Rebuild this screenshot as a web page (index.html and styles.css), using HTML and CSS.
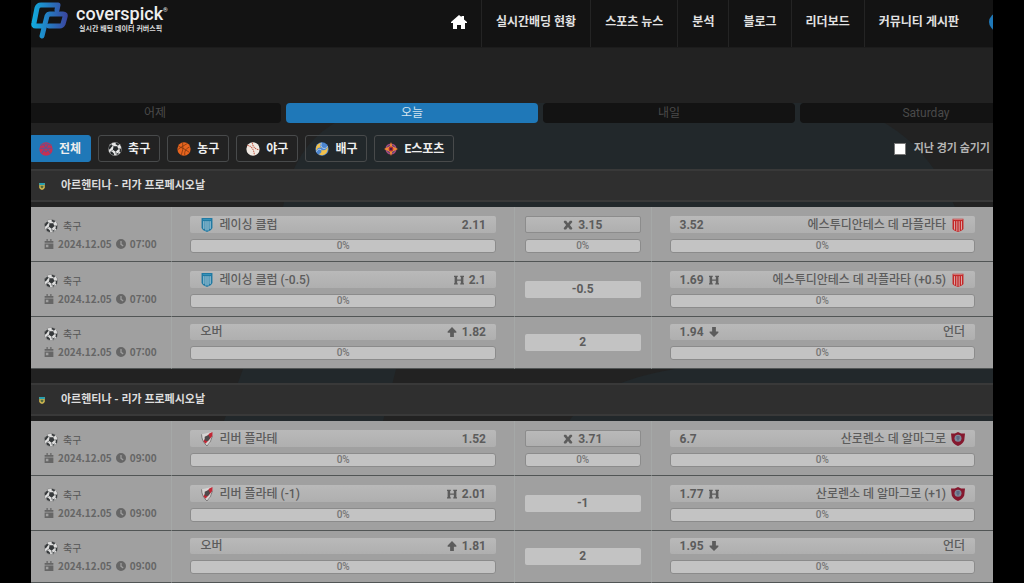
FILE: index.html
```html
<!DOCTYPE html>
<html lang="ko">
<head>
<meta charset="utf-8">
<meta name="viewport" content="width=device-width, initial-scale=1">
<title>coverspick</title>
<link rel="stylesheet" href="styles.css">
</head>
<body>
<svg class="sprite" aria-hidden="true">
  <defs>
    <linearGradient id="logo-fill" gradientUnits="userSpaceOnUse" x1="2" y1="0" x2="36" y2="0"><stop offset="0" stop-color="#12a9dc"/><stop offset="1" stop-color="#3a459f"/></linearGradient>
    <symbol id="ball" viewBox="0 0 20 20"><circle cx="10" cy="10" r="9.5" fill="#e8e8e8"/><path d="M8 6l5 0 2 4-4 4-4-3zM1 7l4-4 1 3-3 4-2 1zM11 .6l5 2-1 2-4-1zM19.300 9l-1 6-2-1 1-4zM3 14l3 0 3 3-1 2-4-2zM13 16l3-1-3 4z" fill="#24282a"/><path d="M8 6L6 5M13 6l2-2M15 10l3 0M11 14l1 4M7 11l-3 3" stroke="#24282a" fill="none"/><circle cx="10" cy="10" r="9.5" fill="none" stroke="#555" stroke-width=".6"/></symbol>
    <symbol id="all" viewBox="0 0 20 20"><circle cx="10" cy="10" r="9.500" fill="#c72f53"/><path d="M3 5q7-5 14 0M2 9h16M4 16l3-5 3 3 3-3 3 5M7 4l3 5 3-5" stroke="#5c5791" stroke-width="1.500" fill="none"/></symbol>
    <symbol id="basket" viewBox="0 0 20 20"><circle cx="10" cy="10" r="9.500" fill="#e8641e"/><path d="M2 6q8 3 16 9M8 1q2 9-2 18M15 2q-9 5-14 9M18 7q-8 3-7 12" stroke="#71330f" stroke-width="1" fill="none"/></symbol>
    <symbol id="baseball" viewBox="0 0 20 20"><circle cx="10" cy="10" r="9.500" fill="#f0e9e2"/><path d="M2 5q9 1 10 14M9 1q1 9 10 10" stroke="#c65a45" stroke-width="1.500" stroke-dasharray="2 1" fill="none"/></symbol>
    <symbol id="volley" viewBox="0 0 20 20"><circle cx="10" cy="10" r="9.500" fill="#4b86d0"/><path d="M9 1C3 2 0 7 2 13c1-5 5-6 9-4C7 7 6 4 9 1zM18 6c-1 5-5 7-9 5 1 4-1 6-4 6 7 5 15-1 13-11z" fill="#f2c14c"/><path d="M9 1q-2 5 2 8 4 2 7-3M9 11q-5-2-7 3" stroke="#cbdcf0" fill="none"/></symbol>
    <symbol id="esport" viewBox="0 0 20 20"><circle cx="10" cy="10" r="7" fill="#44417c" stroke="#a94b7c" stroke-width="2"/><path d="M10 0l2 6 8 4-8 4-2 6-2-6-8-4 8-4z" fill="#f08a32"/><circle cx="10" cy="10" r="3.500" fill="#ad273c"/><circle cx="10" cy="10" r="1.500" fill="#281e42"/></symbol>
    <symbol id="league" viewBox="0 0 8 10"><path d="M0 0h8v6q0 3-4 4-4-1-4-4z" fill="#d0b650"/><path d="M0 0h8v3H0z" fill="#269eb0"/><path d="M2 4h4v2L4 8 2 6z" fill="#50683c"/></symbol>
    <symbol id="racing" viewBox="0 0 16 18"><path d="M1 0h14v13q-1 3-7 5-6-2-7-5z" fill="#217aa3"/><path d="M4 4v10M6.700 4v12M9.300 4v12M12 4v10" stroke="#c8dce4" stroke-width="1.200"/><path d="M3 2h10" stroke="#3e9bc3"/></symbol>
    <symbol id="estudiantes" viewBox="0 0 16 18"><path d="M1 1h14v13q-1 2-7 4-6-2-7-4z" fill="#c42727"/><path d="M3.500 4v11M6.500 4v13M9.500 4v13M12.500 4v11" stroke="#dfcaca" stroke-width="1"/><path d="M2 2h12" stroke="#d58c8c"/></symbol>
    <symbol id="river" viewBox="0 0 16 18"><path d="M1 3l5-1 8-2 1 5-3 10-4 3-5-5z" fill="#d6d4d3"/><path d="M15 0v5L6 15l-3-3L11 2z" fill="#c22735"/><path d="M5 6l5-2 2 4-3 4-4-1z" fill="#4f4a4b"/><path d="M1 3q0 9 7 15 5-4 7-13" fill="none" stroke="#6b6868"/></symbol>
    <symbol id="sanlorenzo" viewBox="0 0 18 18"><path d="M0 2l5 0 4-2 4 2 5 0-1 9q-2 5-8 7-6-2-8-7z" fill="#85182e"/><circle cx="9" cy="8" r="4.500" fill="#7f8999"/><path d="M7 5h4v3l-2 4-2-4z" fill="#5d6a85"/></symbol>
    <symbol id="calendar" viewBox="0 0 16 16"><path d="M1 3h3V0h2v3h4V0h2v3h3v3H1zM1 7h14v9H1zM3 9v4h4V9z" fill="currentColor" fill-rule="evenodd"/></symbol>
    <symbol id="clock" viewBox="0 0 16 16"><path d="M8 0a8 8 0 100 16A8 8 0 008 0zM7 3h2v5l3 2-1 2-4-3z" fill="currentColor" fill-rule="evenodd"/></symbol>
    <symbol id="cross" viewBox="0 0 16 16"><path d="M2 1h3l3 4 3-4h3l1 2-4 5 4 5-1 2h-3l-3-4-3 4H2l-1-2 4-5-4-5z" fill="currentColor"/></symbol>
    <symbol id="h" viewBox="0 0 16 16"><path d="M0 1h6v2H5v4h6V3h-1V1h6v2h-1v10h1v2h-6v-2h1V9H5v4h1v2H0v-2h1V3H0z" fill="currentColor"/></symbol>
    <symbol id="up" viewBox="0 0 16 16"><path d="M8 0l7 7v2h-4v7H5V9H1V7z" fill="currentColor"/></symbol>
    <symbol id="down" viewBox="0 0 16 16"><path d="M8 16l7-7V7h-4V0H5v7H1v2z" fill="currentColor"/></symbol>
  </defs>
</svg>

<div class="frame">
  <svg class="backdrop" viewBox="0 0 962 583" preserveAspectRatio="none" aria-hidden="true"><path d="M252 207q15-100 130-104H780q100 4 144 104z"/><path d="M212 369h153l-15 60H190zM534 429q20-45 110-60h318v60z"/></svg>

  <header class="header">
    <a class="brand" href="#">
      <svg class="brand-mark" viewBox="0 0 38 38" aria-hidden="true"><path d="M26 9L27 4H10Q7 4 6 7L3 22Q2 25 5 25H12M11 35L16 15Q17 13 19 13H32Q35 13 34 16L32 23Q31 25 29 25H18" fill="none" stroke="url(#logo-fill)" stroke-width="5" stroke-linejoin="round" stroke-linecap="round"/></svg>
      <span class="brand-text"><span class="brand-name">coverspick<sup>®</sup></span><span class="brand-sub">실시간 배팅 데이터 커버스픽</span></span>
    </a>
    <nav class="nav">
      <a href="#" aria-label="홈"><svg class="home" viewBox="0 0 16 16" aria-hidden="true"><path d="M8 1l2.500 2V2H13v3.500L16 8v1h-2v6h-4v-4H6v4H2V9H0V8z" fill="#fff"/></svg></a>
      <a href="#">실시간배딩 현황</a><a href="#">스포츠 뉴스</a><a href="#">분석</a><a href="#">블로그</a><a href="#">리더보드</a><a href="#">커뮤니티 게시판</a>
    </nav>
    <button class="round" type="button" aria-label="메뉴"></button>
  </header>

  <main>
    <div class="days">
      <button type="button">어제</button><button type="button" class="active">오늘</button><button type="button">내일</button><button type="button">Saturday</button>
    </div>
    <div class="filters">
      <button type="button" class="active"><svg><use href="#all"/></svg>전체</button>
      <button type="button"><svg><use href="#ball"/></svg>축구</button>
      <button type="button"><svg><use href="#basket"/></svg>농구</button>
      <button type="button"><svg><use href="#baseball"/></svg>야구</button>
      <button type="button"><svg><use href="#volley"/></svg>배구</button>
      <button type="button"><svg><use href="#esport"/></svg>E스포츠</button>
      <label class="hide-past"><input type="checkbox">지난 경기 숨기기</label>
    </div>

    <section class="league">
      <h2><svg><use href="#league"/></svg>아르헨티나 - 리가 프로페시오날</h2>
      <table>
        <colgroup><col class="c-info"><col class="c-team"><col class="c-mid"><col class="c-team"></colgroup>
        <tr>
          <td><div class="sport"><svg><use href="#ball"/></svg>축구</div><div class="when"><svg><use href="#calendar"/></svg>2024.12.05<svg><use href="#clock"/></svg>07:00</div></td>
          <td><button type="button" class="pick"><svg class="crest"><use href="#racing"/></svg><span class="name">레이싱 클럽</span><span class="odd">2.11</span></button><div class="bar">0%</div></td>
          <td><button type="button" class="pick draw"><svg class="mark"><use href="#cross"/></svg><span class="odd">3.15</span></button><div class="bar">0%</div></td>
          <td><button type="button" class="pick"><span class="odd">3.52</span><span class="name end">에스투디안테스 데 라플라타</span><svg class="crest"><use href="#estudiantes"/></svg></button><div class="bar">0%</div></td>
        </tr>
        <tr>
          <td><div class="sport"><svg><use href="#ball"/></svg>축구</div><div class="when"><svg><use href="#calendar"/></svg>2024.12.05<svg><use href="#clock"/></svg>07:00</div></td>
          <td><button type="button" class="pick"><svg class="crest"><use href="#racing"/></svg><span class="name">레이싱 클럽 (-0.5)</span><svg class="mark"><use href="#h"/></svg><span class="odd">2.1</span></button><div class="bar">0%</div></td>
          <td><div class="line">-0.5</div></td>
          <td><button type="button" class="pick"><span class="odd">1.69</span><svg class="mark"><use href="#h"/></svg><span class="name end">에스투디안테스 데 라플라타 (+0.5)</span><svg class="crest"><use href="#estudiantes"/></svg></button><div class="bar">0%</div></td>
        </tr>
        <tr class="total">
          <td><div class="sport"><svg><use href="#ball"/></svg>축구</div><div class="when"><svg><use href="#calendar"/></svg>2024.12.05<svg><use href="#clock"/></svg>07:00</div></td>
          <td><button type="button" class="pick"><span class="name">오버</span><svg class="mark"><use href="#up"/></svg><span class="odd">1.82</span></button><div class="bar">0%</div></td>
          <td><div class="line">2</div></td>
          <td><button type="button" class="pick"><span class="odd">1.94</span><svg class="mark"><use href="#down"/></svg><span class="name end">언더</span></button><div class="bar">0%</div></td>
        </tr>
      </table>
    </section>

    <section class="league">
      <h2><svg><use href="#league"/></svg>아르헨티나 - 리가 프로페시오날</h2>
      <table>
        <colgroup><col class="c-info"><col class="c-team"><col class="c-mid"><col class="c-team"></colgroup>
        <tr>
          <td><div class="sport"><svg><use href="#ball"/></svg>축구</div><div class="when"><svg><use href="#calendar"/></svg>2024.12.05<svg><use href="#clock"/></svg>09:00</div></td>
          <td><button type="button" class="pick"><svg class="crest"><use href="#river"/></svg><span class="name">리버 플라테</span><span class="odd">1.52</span></button><div class="bar">0%</div></td>
          <td><button type="button" class="pick draw"><svg class="mark"><use href="#cross"/></svg><span class="odd">3.71</span></button><div class="bar">0%</div></td>
          <td><button type="button" class="pick"><span class="odd">6.7</span><span class="name end">산로렌소 데 알마그로</span><svg class="crest"><use href="#sanlorenzo"/></svg></button><div class="bar">0%</div></td>
        </tr>
        <tr>
          <td><div class="sport"><svg><use href="#ball"/></svg>축구</div><div class="when"><svg><use href="#calendar"/></svg>2024.12.05<svg><use href="#clock"/></svg>09:00</div></td>
          <td><button type="button" class="pick"><svg class="crest"><use href="#river"/></svg><span class="name">리버 플라테 (-1)</span><svg class="mark"><use href="#h"/></svg><span class="odd">2.01</span></button><div class="bar">0%</div></td>
          <td><div class="line">-1</div></td>
          <td><button type="button" class="pick"><span class="odd">1.77</span><svg class="mark"><use href="#h"/></svg><span class="name end">산로렌소 데 알마그로 (+1)</span><svg class="crest"><use href="#sanlorenzo"/></svg></button><div class="bar">0%</div></td>
        </tr>
        <tr class="total">
          <td><div class="sport"><svg><use href="#ball"/></svg>축구</div><div class="when"><svg><use href="#calendar"/></svg>2024.12.05<svg><use href="#clock"/></svg>09:00</div></td>
          <td><button type="button" class="pick"><span class="name">오버</span><svg class="mark"><use href="#up"/></svg><span class="odd">1.81</span></button><div class="bar">0%</div></td>
          <td><div class="line">2</div></td>
          <td><button type="button" class="pick"><span class="odd">1.95</span><svg class="mark"><use href="#down"/></svg><span class="name end">언더</span></button><div class="bar">0%</div></td>
        </tr>
      </table>
    </section>
  </main>
</div>
</body>
</html>
```
FILE: styles.css
```css
* { box-sizing: border-box; }
body {
  margin: 0;
  background: #000;
  color: #ddd;
  font: 12px/16px Roboto, "Noto Sans CJK KR", sans-serif;
}
button { font: inherit; color: inherit; margin: 0; border: 0; cursor: pointer; }
a { color: inherit; text-decoration: none; }
svg { display: block; flex: none; }
.sprite { position: absolute; width: 0; height: 0; }

.frame {
  position: relative;
  margin: 0 31px;
  min-height: 100vh;
  overflow: hidden;
  background: #222;
}
.backdrop { position: absolute; inset: 0; width: 100%; height: 100%; fill: #22282b; }

.header {
  position: relative;
  display: flex;
  height: 48px;
  background: #131313;
  border-bottom: 1px solid #1c1c1c;
}
.brand { display: flex; align-items: flex-start; gap: 7px; padding-top: 1px; }
.brand-mark { width: 38px; height: 38px; }
.brand-text { display: flex; flex-direction: column; padding-top: 3px; }
.brand-name { font-size: 18px; line-height: 19px; font-weight: 500; color: #eee; }
.brand-name sup { font-size: 6px; line-height: 6px; vertical-align: 8px; }
.brand-sub { padding-left: 3px; font: bold 7px/10px "Noto Sans CJK KR", sans-serif; }
.nav { display: flex; margin-left: auto; font-weight: bold; color: #e2e2e2; }
.nav a {
  display: flex;
  align-items: center;
  padding: 0 14px 4px;
  white-space: nowrap;
}
.nav a + a { border-left: 1px solid #242424; }
.home { width: 16px; height: 16px; }
.round {
  flex: none;
  width: 18px;
  height: 18px;
  margin: 13px -14px 0 16px;
  padding: 0;
  border-radius: 50%;
  background: #1f78b8;
}

main { position: relative; padding-top: 55px; }
.days { display: grid; grid-template-columns: repeat(4, 1fr); gap: 5px; margin: 0 -59px 0 -2px; }
.days button {
  height: 20px;
  padding: 0;
  border-radius: 4px;
  background: #131313;
  color: #4a4a4a;
  line-height: 18px;
}
.days .active { background: #1f78b8; color: #d5e4ef; }

.filters { display: flex; align-items: center; gap: 7px; margin: 12px 3px 0 -2px; font-weight: bold; }
.filters button {
  display: flex;
  align-items: center;
  gap: 6px;
  height: 27px;
  padding: 0 9px;
  border: 1px solid #484a4b;
  border-radius: 3px;
  background: transparent;
  color: #eee;
  white-space: nowrap;
}
.filters .active { background: #1f78b8; border-color: #1f78b8; }
.filters svg { width: 14px; height: 14px; }
.hide-past { display: flex; align-items: center; gap: 8px; margin-left: auto; font-size: 11px; color: #b5b5b5; }
.hide-past input {
  appearance: none;
  width: 12px;
  height: 12px;
  margin: 0;
  border: 1px solid #777;
  background: #fff;
}

.league { margin-bottom: 14px; }
.filters + .league { margin-top: 7px; }
.league:last-child { margin-bottom: 0; }
.league h2 {
  display: flex;
  align-items: center;
  gap: 16px;
  height: 33px;
  margin: 0 0 5px;
  padding: 1px 0 0 8px;
  border: solid #393939;
  border-width: 2px 0;
  background: #2f2f2f;
  font-size: 11px;
}
.league h2 svg { width: 6px; height: 7px; }

table {
  width: 100%;
  table-layout: fixed;
  border-collapse: separate;
  border-spacing: 0;
  background: #a0a0a0;
  color: #5c5c5c;
  font-weight: bold;
}
.c-info { width: 14.6%; }
.c-team { width: 35.6%; }
.c-mid { width: 14.2%; }
td { padding: 9px 18px 8px; border-bottom: 1px solid #515555; vertical-align: middle; }
td + td { border-left: 1px solid #a5a8a7; }
td:first-child { padding: 2px 0 0 13px; }
td:nth-child(3) { padding-left: 10px; padding-right: 10px; }
.total td { padding-top: 7px; }
.total td:first-child { padding-top: 1px; }
.sport, .when { display: flex; align-items: center; font: bold 10px/18px "Noto Sans CJK KR", sans-serif; color: #666; white-space: nowrap; }
.sport { gap: 5px; font-weight: normal; color: #555; }
.sport svg { width: 14px; height: 14px; opacity: .85; }
.when { gap: 4px; }
.when svg { width: 10px; height: 10px; }

.pick {
  display: flex;
  align-items: center;
  gap: 5px;
  width: 100%;
  height: 17px;
  padding: 0 10px;
  border-radius: 2px;
  background: linear-gradient(#b9b9b9, #afafaf);
  text-align: left;
  white-space: nowrap;
}
.name { flex: 1; font-weight: 500; }
.end { text-align: right; }
.crest { width: 14px; height: 14px; }
.mark { width: 10px; height: 10px; }
.draw { justify-content: center; border: 1px solid #8c8c8c; }
.bar {
  height: 14px;
  margin-top: 6px;
  border: 1px solid #8b8b8b;
  border-radius: 3px;
  background: #c3c3c3;
  color: #757575;
  font-size: 10px;
  font-weight: 500;
  line-height: 12px;
  text-align: center;
}
.line { height: 17px; border-radius: 2px; background: #c3c3c3; line-height: 17px; font-size: 12px; text-align: center; }
.total .pick { height: 16px; }
```
